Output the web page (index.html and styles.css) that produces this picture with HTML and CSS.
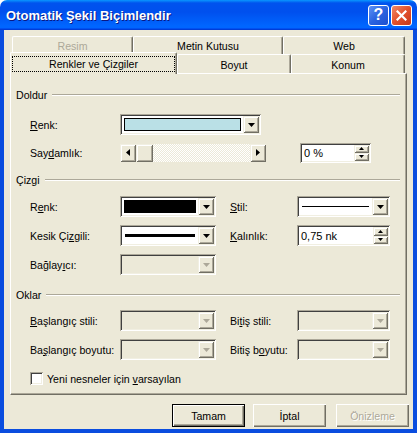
FILE: index.html
```html
<!DOCTYPE html>
<html lang="tr">
<head>
<meta charset="utf-8">
<title>Otomatik Şekil Biçimlendir</title>
<link rel="stylesheet" href="styles.css">
</head>
<body>
<div class="window">
  <div class="titlebar">
    <span class="title">Otomatik Şekil Biçimlendir</span>
    <div class="tb-buttons">
      <span class="tb-btn tb-help">?</span>
      <span class="tb-btn tb-close"><svg width="11" height="11" viewBox="0 0 11 11"><path d="M1.5 1.5 L9.5 9.5 M9.5 1.5 L1.5 9.5" stroke="#fff" stroke-width="2.2" stroke-linecap="square"/></svg></span>
    </div>
  </div>
  <div class="frame">
    <div class="tabs">
      <div class="tabrow tabrow-back">
        <div class="tab tab-disabled w-resim">Resim</div>
        <div class="tab w-metin">Metin Kutusu</div>
        <div class="tab w-web">Web</div>
      </div>
      <div class="tabrow tabrow-front">
        <div class="tab tab-selected w-renk"><span class="focus">Renkler ve Çizgiler</span></div>
        <div class="tab w-boyut">Boyut</div>
        <div class="tab w-konum">Konum</div>
      </div>
    </div>
    <div class="panel">
      <section class="group g-fill">
        <div class="group-head"><span>Doldur</span><i class="etch"></i></div>
        <div class="row">
          <span class="lbl"><u>R</u>enk:</span>
          <div class="combo combo-wide">
            <div class="combo-field"><span class="swatch"></span></div>
            <span class="drop"><svg width="7" height="4" viewBox="0 0 7 4"><path d="M0 0H7L3.5 4Z" fill="#000"/></svg></span>
          </div>
        </div>
        <div class="row">
          <span class="lbl">Say<u>d</u>amlık:</span>
          <div class="scroll">
            <span class="sbtn"><svg width="4" height="7" viewBox="0 0 4 7"><path d="M4 0V7L0 3.5Z" fill="#000"/></svg></span>
            <span class="sthumb"></span>
            <span class="strack"></span>
            <span class="sbtn"><svg width="4" height="7" viewBox="0 0 4 7"><path d="M0 0V7L4 3.5Z" fill="#000"/></svg></span>
          </div>
          <div class="spin spin-pct">
            <span class="spin-text">0 %</span>
            <span class="spin-btns">
              <span class="spb"><svg width="5" height="3" viewBox="0 0 5 3"><path d="M0 3H5L2.5 0Z" fill="#000"/></svg></span>
              <span class="spb"><svg width="5" height="3" viewBox="0 0 5 3"><path d="M0 0H5L2.5 3Z" fill="#000"/></svg></span>
            </span>
          </div>
        </div>
      </section>

      <section class="group g-line">
        <div class="group-head"><span>Çizgi</span><i class="etch"></i></div>
        <div class="row">
          <span class="lbl">R<u>e</u>nk:</span>
          <div class="combo">
            <div class="combo-field"><span class="swatch swatch-black"></span></div>
            <span class="drop"><svg width="7" height="4" viewBox="0 0 7 4"><path d="M0 0H7L3.5 4Z" fill="#000"/></svg></span>
          </div>
          <span class="lbl lbl-r"><u>S</u>til:</span>
          <div class="combo combo-r">
            <div class="combo-field"><span class="line-thin"></span></div>
            <span class="drop"><svg width="7" height="4" viewBox="0 0 7 4"><path d="M0 0H7L3.5 4Z" fill="#000"/></svg></span>
          </div>
        </div>
        <div class="row">
          <span class="lbl">Kesik Çi<u>z</u>gili:</span>
          <div class="combo">
            <div class="combo-field"><span class="line-thick"></span></div>
            <span class="drop"><svg width="7" height="4" viewBox="0 0 7 4"><path d="M0 0H7L3.5 4Z" fill="#000"/></svg></span>
          </div>
          <span class="lbl lbl-r"><u>K</u>alınlık:</span>
          <div class="spin combo-r">
            <span class="spin-text">0,75 nk</span>
            <span class="spin-btns">
              <span class="spb"><svg width="5" height="3" viewBox="0 0 5 3"><path d="M0 3H5L2.5 0Z" fill="#000"/></svg></span>
              <span class="spb"><svg width="5" height="3" viewBox="0 0 5 3"><path d="M0 0H5L2.5 3Z" fill="#000"/></svg></span>
            </span>
          </div>
        </div>
        <div class="row">
          <span class="lbl">Bağlay<u>ı</u>cı:</span>
          <div class="combo combo-off">
            <div class="combo-field"></div>
            <span class="drop"><svg width="7" height="4" viewBox="0 0 7 4"><path d="M0 0H7L3.5 4Z" fill="#ACA899"/></svg></span>
          </div>
        </div>
      </section>

      <section class="group g-arrows">
        <div class="group-head"><span>Oklar</span><i class="etch"></i></div>
        <div class="row">
          <span class="lbl"><u>B</u>aşlangıç stili:</span>
          <div class="combo combo-off">
            <div class="combo-field"></div>
            <span class="drop"><svg width="7" height="4" viewBox="0 0 7 4"><path d="M0 0H7L3.5 4Z" fill="#ACA899"/></svg></span>
          </div>
          <span class="lbl lbl-r">Bi<u>t</u>iş stili:</span>
          <div class="combo combo-r combo-off">
            <div class="combo-field"></div>
            <span class="drop"><svg width="7" height="4" viewBox="0 0 7 4"><path d="M0 0H7L3.5 4Z" fill="#ACA899"/></svg></span>
          </div>
        </div>
        <div class="row">
          <span class="lbl">Ba<u>ş</u>langıç boyutu:</span>
          <div class="combo combo-off">
            <div class="combo-field"></div>
            <span class="drop"><svg width="7" height="4" viewBox="0 0 7 4"><path d="M0 0H7L3.5 4Z" fill="#ACA899"/></svg></span>
          </div>
          <span class="lbl lbl-r">Bitiş b<u>o</u>yutu:</span>
          <div class="combo combo-r combo-off">
            <div class="combo-field"></div>
            <span class="drop"><svg width="7" height="4" viewBox="0 0 7 4"><path d="M0 0H7L3.5 4Z" fill="#ACA899"/></svg></span>
          </div>
        </div>
        <div class="row row-check">
          <span class="check"></span>
          <span class="check-lbl">Yeni nesneler için <u>v</u>arsayılan</span>
        </div>
      </section>
    </div>
    <div class="buttons">
      <button class="btn btn-default">Tamam</button>
      <button class="btn">İptal</button>
      <button class="btn btn-off">Önizleme</button>
    </div>
  </div>
</div>
</body>
</html>
```
FILE: styles.css
```css
* { box-sizing: border-box; }
html, body { margin: 0; padding: 0; background: #fff; }
body { font-family: "Liberation Sans", Arial, sans-serif; font-size: 10.6px; color: #000; }

.window { width: 417px; height: 433px; display: flex; flex-direction: column; }

.titlebar {
  height: 30px; flex: none;
  display: flex; align-items: center; justify-content: space-between;
  padding: 0 5px 0 6px;
  border-radius: 7px 7px 0 0;
  background: linear-gradient(to bottom, #0997ff 0%, #0053ee 10%, #0050ee 40%, #0066ff 86%, #0066ff 92%, #005bff 94%, #003dd7 97%, #003dd7 100%);
}
.title {
  color: #fff; font-family: "Liberation Sans", sans-serif; font-weight: bold; font-size: 13px;
  text-shadow: 1px 1px #0a1883;
}
.tb-buttons { display: flex; gap: 2px; }
.tb-btn {
  width: 21px; height: 21px; border: 1px solid #fff; border-radius: 3px;
  display: flex; align-items: center; justify-content: center;
}
.tb-help {
  background: linear-gradient(135deg, #5d92f5 0%, #2a63e0 50%, #1d4fd0 100%);
  color: #fff; font-family: "Liberation Sans", sans-serif; font-weight: bold; font-size: 16px; line-height: 1;
}
.tb-close { background: linear-gradient(135deg, #f08a6a 0%, #e2502b 50%, #c8381a 100%); }

.frame {
  flex: 1; display: flex; flex-direction: column;
  background: #ece9d8;
  border-style: solid; border-width: 0 4px 4px 4px;
  border-color: #0a4ddf;
  padding: 6px 6px 0 6px;
}

.tabs { display: flex; flex-direction: column; }
.tabrow { display: flex; height: 18px; }
.tabrow-back { padding-left: 2px; }
.tabrow-front { height: 19px; position: relative; z-index: 1; }
.tab {
  height: 18px; display: flex; align-items: center; justify-content: center;
  border-top: 1px solid #fff; border-left: 1px solid #fff; border-right: 1px solid #716f64;
  box-shadow: inset -1px 0 #aca899;
  border-radius: 2px 2px 0 0;
  padding-top: 1px;
}
.tabrow-front .tab { height: 19px; }
.tab-disabled { color: #aca899; }
.tab-selected {
  height: 22px !important; margin-top: -2px; margin-bottom: -1px;
  background: #ece9d8;
}
.focus { border: 1px dotted #000; padding: 1px 36px 1px 36px; }
.w-resim { width: 121px; }
.w-metin { width: 150px; }
.w-web { width: 122px; }
.w-renk { width: 167px; }
.w-boyut { width: 114px; }
.w-konum { width: 114px; }

.panel {
  height: 322px; flex: none;
  border: 1px solid; border-color: #fff #716f64 #716f64 #fff;
  box-shadow: inset -1px -1px #aca899;
  padding: 14px 6px 0 5px;
}

.group { display: flex; flex-direction: column; }
.group-head { height: 14px; display: flex; align-items: center; }
.etch { flex: 1; height: 2px; margin-left: 5px; border-top: 1px solid #aca899; border-bottom: 1px solid #fff; }
.row { height: 21px; display: flex; align-items: center; padding-left: 14px; }
.lbl { width: 90px; flex: none; }
.lbl-r { width: 67px; margin-left: 14px; }
u { text-decoration: underline; text-underline-offset: 1px; }

.g-fill .group-head { margin-bottom: 12px; }
.g-fill .row + .row { margin-top: 7px; }
.g-line { margin-top: 10px; }
.g-line .group-head { margin-bottom: 9px; }
.g-line .row + .row { margin-top: 8px; }
.g-arrows { margin-top: 13px; }
.g-arrows .group-head { margin-bottom: 8px; }
.g-arrows .row + .row { margin-top: 8px; }
.g-arrows .row-check { margin-top: 6px; }

.combo, .spin {
  width: 96px; height: 21px; flex: none;
  display: flex; padding: 2px;
  background: #fff;
  box-shadow: inset 1px 1px #aca899, inset -1px -1px #fff, inset 2px 2px #404040, inset -2px -2px #f1efe2;
}
.combo-wide { width: 141px; }
.combo-r { width: 93px; }
.combo-off { background: #ece9d8; }
.combo-field { flex: 1; display: flex; align-items: center; padding: 2px; }
.swatch { flex: 1; height: 13px; background: #bae0e6; border: 1px solid #000; }
.swatch-black { background: #000; }
.line-thin { flex: 1; height: 1px; background: #000; margin: 0 1px; }
.line-thick { flex: 1; height: 3px; background: #000; margin: 0 1px; }
.drop, .sbtn, .spb {
  background: #ece9d8; display: flex; align-items: center; justify-content: center;
  box-shadow: inset 1px 1px #f1efe2, inset -1px -1px #716f64, inset 2px 2px #fff, inset -2px -2px #aca899;
}
.drop { width: 16px; flex: none; }

.scroll { width: 146px; height: 18px; flex: none; display: flex; }
.sbtn { width: 16px; }
.sthumb {
  width: 17px; background: #ece9d8;
  box-shadow: inset 1px 1px #f1efe2, inset -1px -1px #716f64, inset 2px 2px #fff, inset -2px -2px #aca899;
}
.strack {
  flex: 1;
  background-color: #ece9d8;
  background-image: repeating-conic-gradient(#fff 0 25%, #ece9d8 0 50%);
  background-size: 2px 2px;
}
.spin-pct { width: 71px; height: 20px; margin-left: 34px; }
.spin-text { flex: 1; display: flex; align-items: center; padding-left: 2px; font-size: 11px; }
.spin-btns { width: 15px; display: flex; flex-direction: column; }
.spb { flex: 1; }

.row-check { padding-left: 14px; }
.check {
  width: 13px; height: 13px; flex: none; background: #fff;
  box-shadow: inset 1px 1px #aca899, inset -1px -1px #fff, inset 2px 2px #404040, inset -2px -2px #f1efe2;
}
.check-lbl { margin-left: 4px; }

.buttons { display: flex; justify-content: flex-end; gap: 8px; margin-top: 9px; margin-right: -2px; }
.btn {
  width: 73px; height: 23px; font: inherit; color: #000;
  background: #ece9d8; border: 0; padding: 0;
  box-shadow: inset 1px 1px #fff, inset -1px -1px #716f64, inset -2px -2px #aca899;
}
.btn-default {
  border: 1px solid #000;
  box-shadow: inset 1px 1px #fff, inset -1px -1px #716f64, inset -2px -2px #aca899;
}
.btn-off { color: #aca899; text-shadow: 1px 1px #fff; margin-left: 2px; }
```
